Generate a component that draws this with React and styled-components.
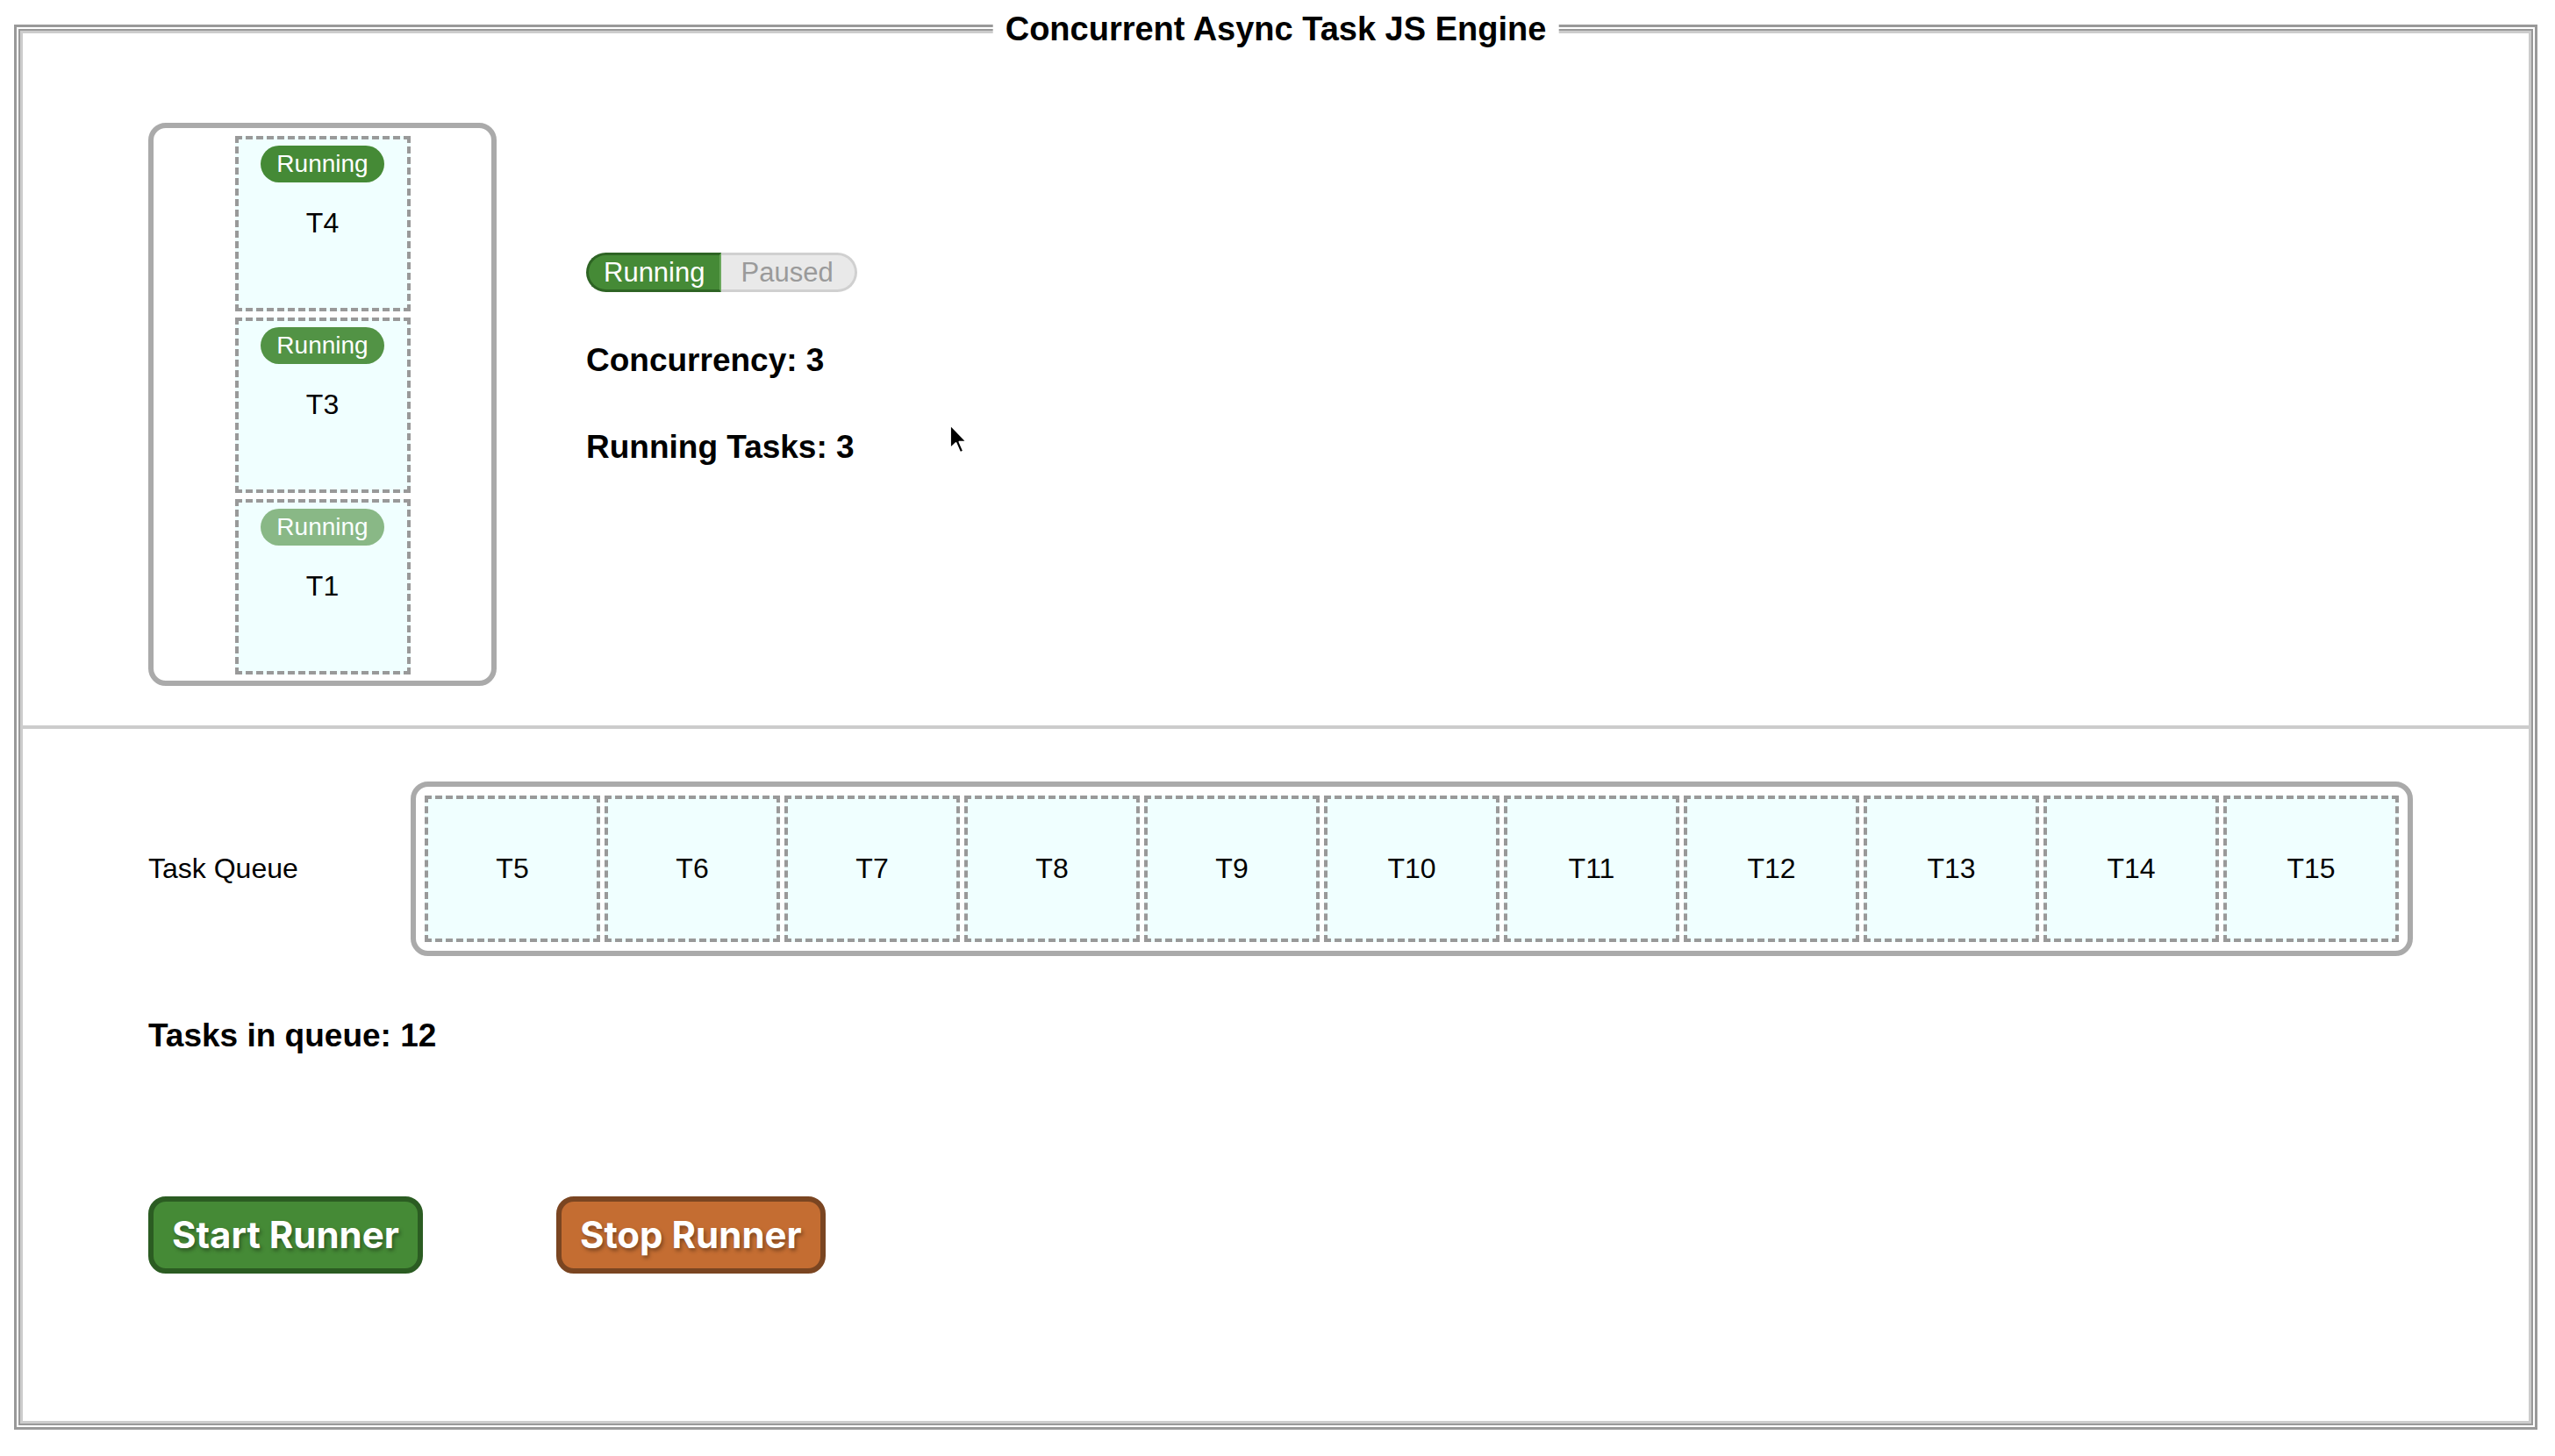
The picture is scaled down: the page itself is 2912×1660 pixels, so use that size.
import styled, { createGlobalStyle } from 'styled-components'

const GlobalStyle = createGlobalStyle`
  html, body {
    margin: 0;
    padding: 0;
    background: #ffffff;
  }
  body {
    font-family: "Liberation Sans", Arial, Helvetica, sans-serif;
    color: #000;
  }
`

const Page = styled.div`
  padding: 28px 20px 0 16px;
`

const Frame = styled.div`
  position: relative;
  box-sizing: border-box;
  width: 2876px;
  height: 1602px;
  border: 3px solid #999;
  padding: 4px;
`

const Legend = styled.div`
  position: absolute;
  top: -20px;
  left: 50%;
  transform: translateX(-50%);
  padding: 0 14px;
  background: #fff;
  font-size: 38px;
  line-height: 44px;
  font-weight: bold;
  white-space: nowrap;
`

const Body = styled.div`
  box-sizing: border-box;
  height: 100%;
  border: 3px solid #ccc;
  box-shadow: 0 0 0 2px #999;
  display: flex;
  flex-direction: column;
`

const TopSection = styled.div`
  position: relative;
  box-sizing: border-box;
  height: 793px;
  border-bottom: 4px solid #ccc;
  padding: 102px 0 0 143px;
  display: flex;
  align-items: flex-start;
  gap: 102px;
`

const RunningBox = styled.div`
  width: 385px;
  border: 6px solid #aaa;
  border-radius: 20px;
  padding: 9px 0 7px;
  display: flex;
  flex-direction: column;
  align-items: center;
  gap: 7px;
`

const TaskCard = styled.div`
  box-sizing: border-box;
  width: 200px;
  height: ${(p) => p.$height}px;
  border: 4px dashed #999;
  background: #f0ffff;
  display: flex;
  flex-direction: column;
  align-items: center;
  justify-content: ${(p) => (p.$queued ? 'center' : 'flex-start')};
  padding-top: ${(p) => (p.$queued ? 0 : 7)}px;
  font-size: 32px;
`

const Pill = styled.span`
  display: inline-block;
  padding: 5px 18px;
  line-height: 32px;
  font-size: 28px;
  color: #fff;
  background: #458a36;
  border-radius: 22px;
  opacity: ${(p) => p.$fade};
`

const TaskName = styled.div`
  margin-top: 28px;
  line-height: 37px;
`

const Info = styled.div`
  margin-top: 148px;
  display: flex;
  flex-direction: column;
  align-items: flex-start;
  gap: 57px;
`

const Toggle = styled.div`
  display: inline-flex;
  font-size: 31px;
  line-height: 39px;
`

const ToggleSide = styled.span`
  border-style: solid;
  ${(p) =>
    p.$on
      ? `
    background: #458a36;
    color: #fff;
    border-color: #2e6424 #6aa85c #2e6424 #2e6424;
    border-width: 3px 2px 3px 3px;
    border-radius: 23px 0 0 23px;
    padding: 0 17px;
  `
      : `
    background: #e9e9e9;
    color: #9a9a9a;
    border-color: #d0d0d0;
    border-width: 3px 3px 3px 0;
    border-radius: 0 23px 23px 0;
    padding: 0 24px 0 22px;
  `}
`

const Stat = styled.div`
  font-size: 37px;
  font-weight: bold;
`

const Cursor = styled.svg`
  position: absolute;
  left: 1055px;
  top: 444px;
  width: 22px;
  height: 37px;
`

const BottomSection = styled.div`
  flex: 1;
  padding: 60px 0 0 143px;
  display: flex;
  flex-direction: column;
  align-items: flex-start;
`

const QueueRow = styled.div`
  display: flex;
  align-items: center;
`

const QueueLabel = styled.div`
  flex: 0 0 299px;
  font-size: 32px;
`

const QueueBox = styled.div`
  display: flex;
  gap: 5px;
  padding: 10px;
  border: 6px solid #aaa;
  border-radius: 20px;
`

const QueueCount = styled.div`
  margin-top: 70px;
  font-size: 37px;
  font-weight: bold;
`

const Buttons = styled.div`
  margin-top: 162px;
  display: flex;
  gap: 152px;
`

const RunnerButton = styled.button`
  font-family: Inter, "Liberation Sans", sans-serif;
  font-size: 42px;
  font-weight: 700;
  line-height: 52px;
  padding: 12px 21px;
  color: #fff;
  text-shadow: 2px 3px 4px rgba(0, 0, 0, 0.35);
  background: ${(p) => p.$bg};
  border: 6px solid ${(p) => p.$edge};
  border-radius: 20px;
  cursor: pointer;
`

const running = [
  { id: 'T4', fade: 1 },
  { id: 'T3', fade: 0.92 },
  { id: 'T1', fade: 0.6 },
]

const queue = ['T5', 'T6', 'T7', 'T8', 'T9', 'T10', 'T11', 'T12', 'T13', 'T14', 'T15']

export default function App() {
  return (
    <Page>
      <GlobalStyle />
      <Frame>
        <Body>
          <TopSection>
            <RunningBox>
              {running.map((t) => (
                <TaskCard key={t.id} $height={200}>
                  <Pill $fade={t.fade}>Running</Pill>
                  <TaskName>{t.id}</TaskName>
                </TaskCard>
              ))}
            </RunningBox>
            <Info>
              <Toggle>
                <ToggleSide $on>Running</ToggleSide>
                <ToggleSide>Paused</ToggleSide>
              </Toggle>
              <Stat>Concurrency: 3</Stat>
              <Stat>Running Tasks: 3</Stat>
            </Info>
            <Cursor viewBox="0 0 12 20">
              <path
                d="M1 1 L1 16 L4.6 12.6 L7.2 18.6 L9.4 17.6 L6.9 11.8 L11.4 11.8 Z"
                fill="#000"
                stroke="#fff"
                strokeWidth="1.2"
                strokeLinejoin="round"
              />
            </Cursor>
          </TopSection>
          <BottomSection>
            <QueueRow>
              <QueueLabel>Task Queue</QueueLabel>
              <QueueBox>
                {queue.map((id) => (
                  <TaskCard key={id} $height={167} $queued>
                    {id}
                  </TaskCard>
                ))}
              </QueueBox>
            </QueueRow>
            <QueueCount>Tasks in queue: 12</QueueCount>
            <Buttons>
              <RunnerButton $bg="#458a36" $edge="#2b5c22">
                Start Runner
              </RunnerButton>
              <RunnerButton $bg="#c46d32" $edge="#7a4521">
                Stop Runner
              </RunnerButton>
            </Buttons>
          </BottomSection>
        </Body>
        <Legend>Concurrent Async Task JS Engine</Legend>
      </Frame>
    </Page>
  )
}
